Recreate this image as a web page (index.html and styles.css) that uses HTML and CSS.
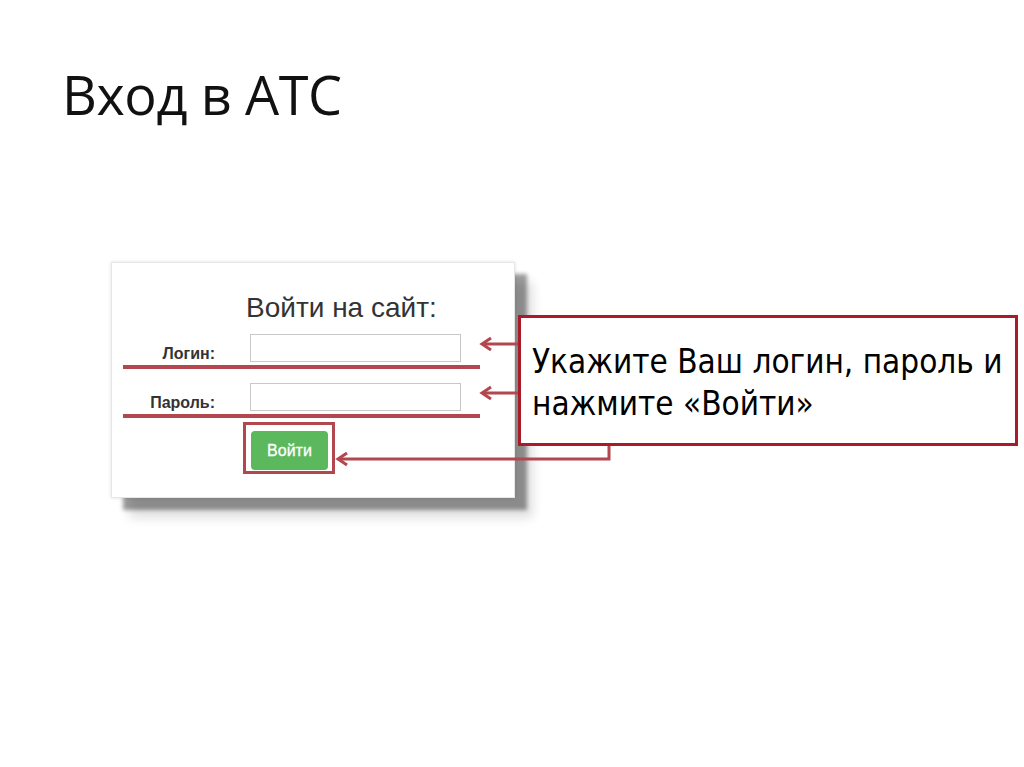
FILE: index.html
```html
<!DOCTYPE html>
<html lang="ru">
<head>
<meta charset="utf-8">
<title>Вход в АТС</title>
<link rel="stylesheet" href="styles.css">
</head>
<body>
<main class="slide">
  <h1 class="slide-title">Вход в АТС</h1>
  <section class="stage">
    <div class="shot">
      <h2 class="shot-title">Войти на сайт:</h2>
      <div class="form">
        <label class="form-label">Логин:</label>
        <div class="form-input"></div>
        <label class="form-label">Пароль:</label>
        <div class="form-input"></div>
        <div class="form-actions"><span class="btn">Войти</span></div>
      </div>
    </div>
    <div class="callout">
      <p class="callout-text">Укажите Ваш логин, пароль и нажмите «Войти»</p>
    </div>
    <svg class="annotations" viewBox="0 262 1024 270" width="1024" height="270" aria-hidden="true">
      <g fill="none" stroke="#b3474e" stroke-linecap="butt" stroke-linejoin="miter">
        <line x1="123" y1="367" x2="480" y2="367" stroke-width="4"/>
        <line x1="123" y1="416" x2="480" y2="416" stroke-width="4"/>
        <line x1="482" y1="344" x2="518" y2="344" stroke-width="3"/>
        <polyline points="491,338 482,344 491,350" stroke-width="3"/>
        <line x1="482" y1="393" x2="518" y2="393" stroke-width="3"/>
        <polyline points="491,387 482,393 491,399" stroke-width="3"/>
        <rect x="244.5" y="423.5" width="89" height="49" stroke-width="3"/>
        <polyline points="609,446 609,459 338,459" stroke-width="3"/>
        <polyline points="347,453 338,459 347,465" stroke-width="3"/>
      </g>
    </svg>
  </section>
</main>
</body>
</html>
```
FILE: styles.css
```css
html, body {
  margin: 0;
  padding: 0;
  background: #ffffff;
}

.slide {
  width: 1024px;
  height: 767px;
  overflow: hidden;
}

.slide-title {
  margin: 62px 0 0 62px;
  font-family: "Open Sans", "Liberation Sans", sans-serif;
  font-weight: 400;
  font-size: 54px;
  line-height: 64px;
  color: #111;
  letter-spacing: -0.4px;
}

.stage {
  position: relative;
  display: flex;
  align-items: flex-start;
  margin-top: 136px;
  padding-left: 111px;
}

.shot {
  box-sizing: border-box;
  width: 404px;
  height: 236px;
  padding-top: 28px;
  background: #fff;
  border: 1px solid #e6e6e6;
  box-shadow: 12px 12px 4px rgba(0, 0, 0, 0.38), 18px 20px 10px rgba(0, 0, 0, 0.12), 0 0 4px rgba(0, 0, 0, 0.12);
  font-family: "Liberation Sans", Arial, sans-serif;
}

.shot-title {
  margin: 0 0 0 134px;
  font-size: 28px;
  line-height: 33px;
  font-weight: 400;
  color: #333;
}

.form {
  display: grid;
  grid-template-columns: 103px 211px;
  column-gap: 35px;
  row-gap: 21px;
  margin-top: 10px;
}

.form-label {
  align-self: end;
  justify-self: end;
  font-size: 16px;
  line-height: 17px;
  font-weight: 700;
  color: #333;
}

.form-input {
  box-sizing: border-box;
  height: 28px;
  background: #fff;
  border: 1px solid #c8c8c8;
}

.form-actions {
  grid-column: 2;
  margin-top: -1px;
}

.btn {
  display: flex;
  align-items: center;
  justify-content: center;
  box-sizing: border-box;
  width: 77px;
  height: 39px;
  margin-left: 1px;
  background: #5cb85c;
  border-radius: 4px;
  color: #fff;
  font-size: 16px;
  -webkit-text-stroke: 0.3px #fff;
}

.callout {
  position: relative;
  box-sizing: border-box;
  width: 500px;
  height: 131px;
  margin: 53px 0 0 3px;
  padding: 23px 4px 0 11px;
  background: #fff;
  border: 3px solid #a81c29;
}

.callout-text {
  margin: 0;
  font-family: "DejaVu Sans Condensed", "DejaVu Sans", sans-serif;
  font-stretch: condensed;
  font-size: 33px;
  line-height: 42px;
  color: #000;
}

.annotations {
  position: absolute;
  left: 0;
  top: 0;
  overflow: visible;
}
```
